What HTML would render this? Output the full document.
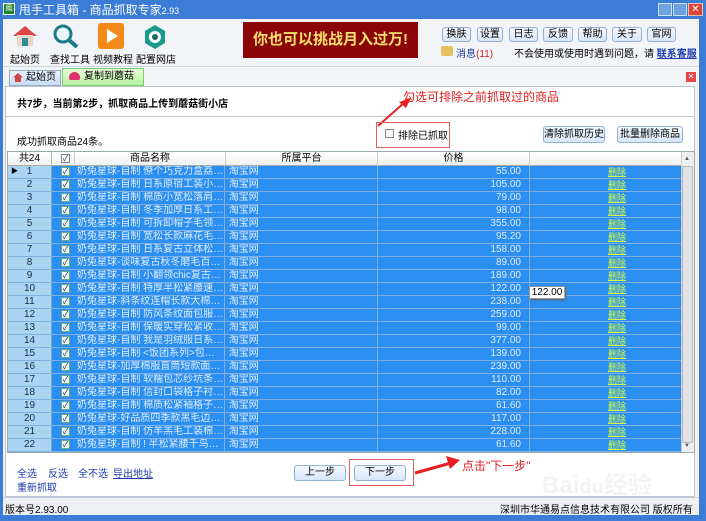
<!DOCTYPE html><html><head><meta charset="utf-8"><style>
*{margin:0;padding:0;box-sizing:border-box}
body{width:706px;height:521px;overflow:hidden;background:#3b7dd6;font-family:"Liberation Sans","Noto Sans CJK SC",sans-serif;font-size:10px;color:#000;position:relative}
.a{position:absolute}
.btn{position:absolute;border:1px solid #8fb0d8;border-radius:3px;background:linear-gradient(#f4f9ff,#d6e6f8);font-size:10px;text-align:center;line-height:14px;color:#000}
.row{position:absolute;left:8px;width:673px;height:13px;background:#2a8ff0;border-bottom:1px solid #7fb0e0}
.row div{position:absolute;top:0;height:12px;line-height:12px;color:#e0ecff;font-size:10px;white-space:nowrap;overflow:hidden}
.rh{left:0;width:44px;background:#a9d4f2;border-right:1px solid #7aa8d0;color:#1a2a50!important;text-align:center}
.cb{left:53px;top:1px!important;width:9px;height:9px!important;background:#f4f4f4;border:1px solid #6a8;color:#136!important;font-size:8px!important;line-height:8px!important;text-align:center}
.nm{left:67px;width:150px;padding-left:2px;text-overflow:ellipsis;border-right:1px solid #7fb0e0;height:13px!important}
.pf{left:218px;width:152px;border-right:1px solid #7fb0e0;height:13px!important}
.pr{left:370px;width:152px;text-align:right;padding-right:8px;border-right:1px solid #7fb0e0;height:13px!important}
.dl{left:600px;color:#d8ff40!important;text-decoration:underline;font-size:9px!important}
</style></head><body>
<div class="a" style="left:3px;top:3px;width:12px;height:12px;background:#1e8a2e;border:1px solid #fff;color:#fff;font-size:7px;line-height:10px;text-align:center">鳳</div>
<div class="a" style="left:19px;top:2px;color:#fff;font-size:12px;line-height:16px">甩手工具箱 - 商品抓取专家<span style="font-size:9px">2.93</span></div>
<div class="a" style="left:658px;top:3px;width:14px;height:13px;background:#6fa3e0;border:1px solid #cfe0f5"></div>
<div class="a" style="left:673px;top:3px;width:14px;height:13px;background:#6fa3e0;border:1px solid #cfe0f5"></div>
<div class="a" style="left:688px;top:3px;width:15px;height:13px;background:#d9453a;border:1px solid #f0c0b0;color:#fff;font-size:10px;line-height:11px;text-align:center">✕</div>
<div class="a" style="left:3px;top:19px;width:696px;height:496px;background:#f2f4f7"></div>
<div class="a" style="left:12px;top:25px;width:26px;height:22px">
<svg width="26" height="22"><polygon points="13,1 1,11 25,11" fill="#d44"/><rect x="5" y="10" width="16" height="11" fill="#e8d8c8"/><rect x="10" y="13" width="6" height="8" fill="#2a8a9a"/></svg></div>
<div class="a" style="left:52px;top:24px"><svg width="28" height="24"><circle cx="11" cy="10" r="8" fill="#e8f6fa" stroke="#1a7a8a" stroke-width="3"/><line x1="17" y1="16" x2="25" y2="23" stroke="#1a7a8a" stroke-width="4"/></svg></div>
<div class="a" style="left:98px;top:23px;width:26px;height:26px;background:#f58a1a;border-radius:3px"><svg width="26" height="26"><polygon points="9,6 20,13 9,20" fill="#fff"/></svg></div>
<div class="a" style="left:142px;top:24px"><svg width="26" height="26"><polygon points="13,1 23,7 23,19 13,25 3,19 3,7" fill="#1a9a8a"/><circle cx="13" cy="13" r="6" fill="#fff"/><circle cx="13" cy="13" r="3" fill="#1a6a6a"/></svg></div>
<div class="a" style="left:10px;top:51px;font-size:10px">起始页</div>
<div class="a" style="left:50px;top:51px;font-size:10px">查找工具</div>
<div class="a" style="left:93px;top:51px;font-size:10px">视频教程</div>
<div class="a" style="left:136px;top:51px;font-size:10px">配置网店</div>
<div class="a" style="left:243px;top:22px;width:175px;height:36px;background:#8a0505;color:#f8e070;font-size:15px;font-weight:bold;line-height:36px;text-align:center">你也可以挑战月入过万!</div>
<div class="btn" style="left:442px;top:27px;width:29px;height:15px">换肤</div>
<div class="btn" style="left:477px;top:27px;width:26px;height:15px">设置</div>
<div class="btn" style="left:509px;top:27px;width:29px;height:15px">日志</div>
<div class="btn" style="left:543px;top:27px;width:30px;height:15px">反馈</div>
<div class="btn" style="left:578px;top:27px;width:29px;height:15px">帮助</div>
<div class="btn" style="left:612px;top:27px;width:30px;height:15px">关于</div>
<div class="btn" style="left:647px;top:27px;width:29px;height:15px">官网</div>
<div class="a" style="left:441px;top:46px;width:12px;height:10px;background:#e8c060;border-radius:2px"></div>
<div class="a" style="left:456px;top:45px;font-size:10px;color:#1a3a9a">消息<span style="color:#c02020">(11)</span></div>
<div class="a" style="left:514px;top:45px;font-size:10px">不会使用或使用时遇到问题，请 <span style="color:#1a3aaa;text-decoration:underline;font-weight:bold">联系客服</span></div>
<div class="a" style="left:3px;top:66px;width:696px;height:1px;background:#d0d6e0"></div>
<div class="a" style="left:9px;top:70px;width:52px;height:16px;border:1px solid #9ab;background:linear-gradient(#e8f2ff,#c8dcf4);font-size:10px;line-height:14px;padding-left:16px">起始页</div>
<div class="a" style="left:13px;top:73px;width:10px;height:9px;background:#c44;clip-path:polygon(50% 0,100% 50%,80% 50%,80% 100%,20% 100%,20% 50%,0 50%)"></div>
<div class="a" style="left:62px;top:68px;width:82px;height:18px;border:1px solid #7c7;background:linear-gradient(#e8ffd8,#b8f0a0);font-size:10px;line-height:16px;padding-left:21px">复制到蘑菇街</div>
<div class="a" style="left:69px;top:72px;width:11px;height:8px;background:#e0306a;border-radius:6px 6px 2px 2px"></div>
<div class="a" style="left:686px;top:72px;width:10px;height:10px;background:#e04848;color:#fff;font-size:8px;line-height:10px;text-align:center">✕</div>
<div class="a" style="left:5px;top:86px;width:690px;height:411px;background:#fff;border:1px solid #b8c4d4"></div>
<div class="a" style="left:17px;top:95px;font-size:10px;font-weight:bold">共7步，当前第2步，抓取商品上传到蘑菇街小店</div>
<div class="a" style="left:6px;top:116px;width:688px;height:1px;background:#c8c8c8"></div>
<div class="a" style="left:403px;top:88px;font-size:12px;color:#e02020">勾选可排除之前抓取过的商品</div>
<svg class="a" style="left:375px;top:98px" width="40" height="30"><line x1="3" y1="28" x2="30" y2="4" stroke="#e82020" stroke-width="2"/><polygon points="36,0 24,4 31,10" fill="#e82020"/></svg>
<div class="a" style="left:17px;top:133px;font-size:10px">成功抓取商品24条。</div>
<div class="a" style="left:376px;top:122px;width:74px;height:26px;border:1px solid #e06060"></div>
<div class="a" style="left:385px;top:129px;width:9px;height:9px;border:1px solid #888;background:#fafafa"></div>
<div class="a" style="left:398px;top:127px;font-size:10px">排除已抓取</div>
<div class="btn" style="left:543px;top:126px;width:62px;height:17px;line-height:15px">清除抓取历史</div>
<div class="btn" style="left:617px;top:126px;width:66px;height:17px;line-height:15px">批量删除商品</div>
<div class="a" style="left:7px;top:151px;width:688px;height:302px;border:1px solid #9aa;background:#fff"></div>
<div class="a" style="left:8px;top:152px;width:673px;height:14px;background:linear-gradient(#fff,#eef0f2);border-bottom:1px solid #aaa;font-size:10px;line-height:14px">
<span class="a" style="left:0;width:44px;text-align:center;border-right:1px solid #bbb;height:14px">共24</span>
<span class="a" style="left:53px;top:2px;width:9px;height:9px;border:1px solid #789;font-size:8px;line-height:8px;text-align:center;color:#236">✓</span>
<span class="a" style="left:66px;width:152px;text-align:center;border-left:1px solid #ccc;border-right:1px solid #ccc;height:14px">商品名称</span>
<span class="a" style="left:218px;width:152px;text-align:center;border-right:1px solid #ccc;height:14px">所属平台</span>
<span class="a" style="left:370px;width:152px;text-align:center;border-right:1px solid #ccc;height:14px">价格</span>
</div>
<div class="a" style="left:681px;top:152px;width:13px;height:300px;background:#eceef0;border-left:1px solid #ccc"></div>
<div class="a" style="left:682px;top:166px;width:11px;height:277px;background:#e0e2e6;border:1px solid #bbb;border-radius:2px"></div>
<div id="rows"></div>
<script>
var n=["僚个巧克力盒荔枝纹…","日系原宿工装小口袋…","棉质小宽松落肩高领…","冬季加厚日系工装羊…","可拆卸帽子毛领a字斗篷羽…","宽松长款麻花毛衣错…","日系复古立体松果扣…","-谈味复古秋冬磨毛百搭千…","小翻领chic复古小个…","特厚半松紧腰速脚裤…","-斜条纹连帽长款大棉服过…","防风条纹面包服女chi…","保暖实穿松紧收口运…","我是羽绒服日系个性…","<饭团系列>包芯纱…","-加厚棉服直筒短款面包服…","软糯包芯纱坑条纯色…","信封口袋格子衬衫女…","棉质松紧袖格子衬衫…","-好品质四季款黑毛边弹…","仿羊羔毛工装棉服女…","! 半松紧腰千鸟格毛…"];
var p=["55.00","105.00","79.00","98.00","355.00","95.20","158.00","89.00","189.00","122.00","238.00","259.00","99.00","377.00","139.00","239.00","110.00","82.00","61.60","117.00","228.00","61.60"];
var h="";
for(var i=0;i<22;i++){var nm=n[i];var pre=nm.charAt(0)=="-"?"奶兔星球"+nm:"奶兔星球-自制 "+nm;
h+='<div class="row" style="top:'+(166+i*13)+'px"><div class="rh">'+(i+1)+'</div>'+(i==0?'<div style="left:3px;color:#000;font-size:7px">▶</div>':'')+'<div class="cb">✓</div><div class="nm">'+pre+'</div><div class="pf">&nbsp;淘宝网</div><div class="pr">'+p[i]+'</div><div class="dl">删除</div></div>';}
document.getElementById("rows").innerHTML=h;
</script>
<div class="a" style="left:529px;top:286px;width:36px;height:13px;background:#fff;border:1px solid #999;box-shadow:1px 1px 2px #666;font-size:10px;line-height:11px;text-align:center">122.00</div>
<div class="a" style="left:684px;top:156px;font-size:6px;color:#555">▲</div>
<div class="a" style="left:684px;top:443px;font-size:6px;color:#555">▼</div>
<div class="a" style="left:17px;top:465px;font-size:10px;color:#1a3aaa">全选</div>
<div class="a" style="left:48px;top:465px;font-size:10px;color:#1a3aaa">反选</div>
<div class="a" style="left:78px;top:465px;font-size:10px;color:#1a3aaa">全不选</div>
<div class="a" style="left:113px;top:465px;font-size:10px;color:#1a3aaa;text-decoration:underline">导出地址</div>
<div class="a" style="left:17px;top:479px;font-size:10px;color:#1a3aaa">重新抓取</div>
<div class="btn" style="left:294px;top:465px;width:52px;height:16px">上一步</div>
<div class="a" style="left:349px;top:459px;width:65px;height:27px;border:1px solid #e06060"></div>
<div class="btn" style="left:354px;top:465px;width:52px;height:16px">下一步</div>
<svg class="a" style="left:413px;top:455px" width="50" height="25"><line x1="2" y1="18" x2="38" y2="8" stroke="#e82020" stroke-width="3"/><polygon points="47,5 33,1 37,14" fill="#e82020"/></svg>
<div class="a" style="left:462px;top:457px;font-size:12px;color:#e02020">点击"下一步"</div>
<div class="a" style="left:542px;top:465px;font-size:24px;color:rgba(235,235,235,.6);font-weight:bold">Bai<span style="font-size:20px">du</span>经验</div>
<div class="a" style="left:3px;top:497px;width:696px;height:18px;background:#eef0f3;border-top:1px solid #c8ccd4"></div>
<div class="a" style="left:5px;top:501px;font-size:10px">版本号2.93.00</div>
<div class="a" style="left:500px;top:501px;font-size:10px">深圳市华通易点信息技术有限公司 版权所有</div>
</body></html>
